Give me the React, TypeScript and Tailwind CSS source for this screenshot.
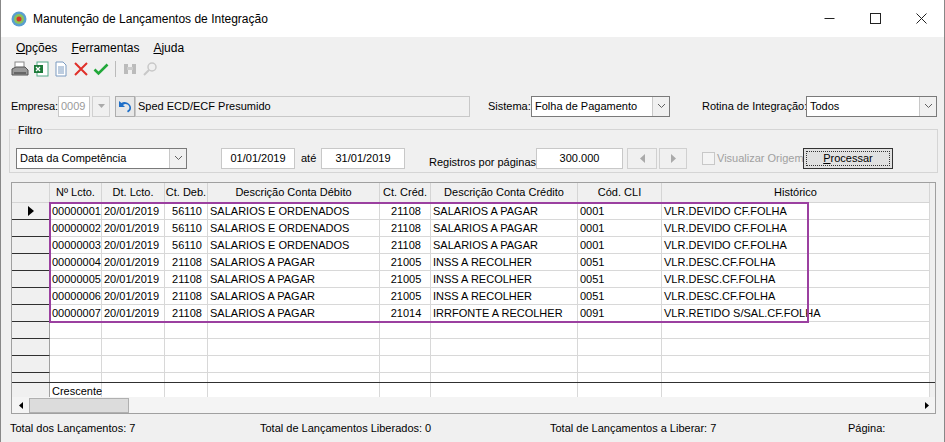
import React from "react";

const cols = [38, 52, 63, 43, 172, 51, 147, 84, 268];
const heads = ["", "Nº Lcto.", "Dt. Lcto.", "Ct. Deb.", "Descrição Conta Débito", "Ct. Créd.", "Descrição Conta Crédito", "Cód. CLI", "Histórico"];
const rows = [
  ["00000001", "20/01/2019", "56110", "SALARIOS E ORDENADOS", "21108", "SALARIOS A PAGAR", "0001", "VLR.DEVIDO CF.FOLHA"],
  ["00000002", "20/01/2019", "56110", "SALARIOS E ORDENADOS", "21108", "SALARIOS A PAGAR", "0001", "VLR.DEVIDO CF.FOLHA"],
  ["00000003", "20/01/2019", "56110", "SALARIOS E ORDENADOS", "21108", "SALARIOS A PAGAR", "0001", "VLR.DEVIDO CF.FOLHA"],
  ["00000004", "20/01/2019", "21108", "SALARIOS A PAGAR", "21005", "INSS A RECOLHER", "0051", "VLR.DESC.CF.FOLHA"],
  ["00000005", "20/01/2019", "21108", "SALARIOS A PAGAR", "21005", "INSS A RECOLHER", "0051", "VLR.DESC.CF.FOLHA"],
  ["00000006", "20/01/2019", "21108", "SALARIOS A PAGAR", "21005", "INSS A RECOLHER", "0051", "VLR.DESC.CF.FOLHA"],
  ["00000007", "20/01/2019", "21108", "SALARIOS A PAGAR", "21014", "IRRFONTE A RECOLHER", "0091", "VLR.RETIDO S/SAL.CF.FOLHA"],
];
const center = [false, false, false, true, false, true, false, false, false];
const rowHeights = [17, 17, 17, 17, 17, 17, 17, 17, 17, 17, 9];

const Chevron = () => (
  <svg width="9" height="6" viewBox="0 0 9 6"><path d="M1 1l3.5 3.5L8 1" fill="none" stroke="#606060" strokeWidth="1" /></svg>
);

function Select({ text, w }: { text: string; w: string }) {
  return (
    <div className={`flex h-[21px] shrink-0 items-center border border-[#7a7a7a] bg-white ${w}`}>
      <span className="flex-1 pl-[3px] truncate">{text}</span>
      <div className="flex h-full w-[17px] items-center justify-center border-l border-[#c8c8c8] bg-[#f0f0f0]"><Chevron /></div>
    </div>
  );
}

export default function App() {
  return (
    <div className="w-[945px] h-[442px] bg-[#f0f0f0] text-[11px] text-black overflow-hidden border-x border-[#888] whitespace-nowrap" style={{ fontFamily: "'Liberation Sans', Arial, sans-serif" }}>
      {/* Title */}
      <div className="flex h-[37px] items-center bg-white pl-[10px]">
        <svg width="16" height="16" viewBox="0 0 16 16"><circle cx="8" cy="8" r="7.5" fill="#5a9fd0" /><circle cx="8" cy="8" r="5" fill="#8cc35a" /><circle cx="8" cy="8" r="2.5" fill="#d8332a" /></svg>
        <span className="ml-[6px] text-[12px]">Manutenção de Lançamentos de Integração</span>
        <div className="ml-auto flex h-full">
          {["min", "max", "close"].map(k => (
            <div key={k} className="flex w-[46px] items-center justify-center">
              <svg width="11" height="11" viewBox="0 0 11 11" fill="none" stroke="#222" strokeWidth="1">
                {k === "min" && <path d="M0.5 5.5h10" />}
                {k === "max" && <rect x="0.5" y="0.5" width="10" height="10" />}
                {k === "close" && <path d="M0.5 0.5l10 10M10.5 0.5l-10 10" />}
              </svg>
            </div>
          ))}
        </div>
      </div>
      {/* Menu */}
      <div className="flex h-[19px] items-center gap-[14px] pl-[15px] pt-[2px] text-[12px]">
        <span><u>O</u>pções</span><span><u>F</u>erramentas</span><span><u>A</u>juda</span>
      </div>
      {/* Toolbar */}
      <div className="flex h-[26px] items-center gap-[4px] pl-[10px]">
        <svg width="18" height="16" viewBox="0 0 18 16"><rect x="4" y="1" width="9" height="6" fill="#fff" stroke="#888" /><path d="M1 8l4-2h9l3 3v5H1z" fill="#9a9a9a" stroke="#555" /><rect x="3" y="11" width="12" height="2" fill="#666" /></svg>
        <svg width="16" height="16" viewBox="0 0 16 16"><rect x="4" y="1" width="11" height="14" fill="#fff" stroke="#5a8" /><rect x="1" y="4" width="9" height="8" fill="#1d7a3a" /><path d="M3 6l4 4M7 6l-4 4" stroke="#fff" strokeWidth="1.3" /></svg>
        <svg width="16" height="16" viewBox="0 0 16 16"><path d="M3 1h7l3 3v11H3z" fill="#fff" stroke="#7a9ac0" /><path d="M5 6h6M5 8h6M5 10h6M5 12h6" stroke="#7a9ac0" /></svg>
        <svg width="16" height="16" viewBox="0 0 16 16"><path d="M2 2l12 12M14 2L2 14" stroke="#e0302a" strokeWidth="2" /></svg>
        <svg width="16" height="16" viewBox="0 0 16 16"><path d="M1.5 8.5l4 4 9-9" fill="none" stroke="#22a83a" strokeWidth="2.6" /></svg>
        <div className="mx-[2px] h-[16px] w-px bg-[#bbb]" />
        <svg width="16" height="16" viewBox="0 0 16 16"><rect x="2" y="3" width="4" height="10" fill="#bbb" /><rect x="10" y="3" width="4" height="10" fill="#bbb" /><rect x="5" y="6" width="6" height="3" fill="#ccc" /></svg>
        <svg width="16" height="16" viewBox="0 0 16 16"><circle cx="10" cy="6" r="4" fill="none" stroke="#c8c8c8" strokeWidth="1.5" /><path d="M7 9l-5 5" stroke="#c8c8c8" strokeWidth="2" /></svg>
      </div>
      {/* Row 1 */}
      <div className="mt-[13px] flex h-[22px] items-center pl-[10px]">
        <span className="w-[47px]">Empresa:</span>
        <div className="flex h-[21px] w-[32px] shrink-0 items-center border border-[#c8c8c8] bg-white pl-[2px] text-[#9a9a9a]">0009</div>
        <div className="ml-[2px] flex h-[21px] w-[18px] shrink-0 items-center justify-center border border-[#d0d0d0] bg-[#f0f0f0]">
          <svg width="7" height="4" viewBox="0 0 7 4"><path d="M0 0h7L3.5 4z" fill="#aaa" /></svg>
        </div>
        <div className="ml-[5px] flex h-[21px] w-[20px] shrink-0 items-center justify-center border border-[#adadad] bg-[#e8e8e8]">
          <svg width="16" height="14" viewBox="0 0 16 14"><path d="M2 2v6h6L6 6c2-2 5-1 6 1 1 2 0 4-2 5l1 1.5c3-1.5 4-5 2-7.5S7 2 4.5 4z" fill="#1f6fc8" /></svg>
        </div>
        <div className="flex h-[21px] w-[335px] shrink-0 items-center border border-[#c8c8c8] bg-[#f0f0f0] pl-[2px]">Sped ECD/ECF Presumido</div>
        <span className="ml-[18px] w-[43px]">Sistema:</span>
        <Select text="Folha de Pagamento" w="w-[139px]" />
        <span className="ml-[32px] w-[104px]">Rotina de Integração:</span>
        <Select text="Todos" w="w-[131px]" />
      </div>
      {/* Filtro */}
      <div className="relative ml-[8px] mt-[12px] h-[44px] w-[929px] border border-[#d5d5d5]">
        <span className="absolute left-[6px] top-[-8px] bg-[#f0f0f0] px-[2px]">Filtro</span>
        <div className="mt-[16px] flex items-center pl-[6px]">
          <Select text="Data da Competência" w="w-[171px]" />
          <div className="ml-[34px] flex h-[21px] w-[74px] shrink-0 items-center justify-center border border-[#c8c8c8] bg-white">01/01/2019</div>
          <span className="ml-[6px] w-[18px]">até</span>
          <div className="ml-[2px] flex h-[21px] w-[84px] shrink-0 items-center justify-center border border-[#c8c8c8] bg-white">31/01/2019</div>
          <span className="ml-[24px] mt-[8px] w-[105px]">Registros por páginas:</span>
          <div className="ml-[2px] flex h-[21px] w-[87px] shrink-0 items-center justify-center border border-[#c8c8c8] bg-white">300.000</div>
          <div className="ml-[4px] flex h-[21px] w-[30px] items-center justify-center border border-[#d0d0d0]"><svg width="5" height="9"><path d="M5 0v9L0 4.5z" fill="#aaa" /></svg></div>
          <div className="ml-[2px] flex h-[21px] w-[28px] items-center justify-center border border-[#d0d0d0]"><svg width="5" height="9"><path d="M0 0v9l5-4.5z" fill="#aaa" /></svg></div>
          <div className="ml-[15px] h-[13px] w-[13px] border border-[#c8c8c8] bg-[#f4f4f4]" />
          <span className="ml-[2px] w-[86px] text-[#a0a0a0]">Visualizar Origem</span>
          <div className="flex h-[21px] w-[90px] items-center justify-center border border-[#333] bg-[#e1e1e1]">
            <div className="flex h-[15px] w-[84px] items-center justify-center border border-dotted border-[#333]"><span><u>P</u>rocessar</span></div>
          </div>
        </div>
      </div>
      {/* Grid */}
      <div className="relative ml-[10px] mt-[9px] h-[232px] w-[925px] border border-[#a0a0a0] bg-[#f0f0f0]">
        <div className="flex h-[20px]">
          {heads.map((h, i) => (
            <div key={i} style={{ width: cols[i] }} className="flex shrink-0 items-center justify-center border-r border-b border-[#d5d5d5] bg-[#f0f0f0]">{h}</div>
          ))}
        </div>
        {rowHeights.map((hgt, r) => (
          <div key={r} className="flex" style={{ height: hgt }}>
            {cols.map((w, i) => (
              <div key={i} style={{ width: w }} className={`flex shrink-0 items-center overflow-hidden ${i === 0 ? "justify-center border-r border-r-[#a0a0a0] bg-[#f0f0f0] " + (r < 10 ? "border-b border-b-[#303030]" : "") : "border-r border-[#d8d8d8] bg-white pl-[2px] " + (r < 10 ? "border-b " : "") + (center[i] ? "justify-center" : "")}`}>
                {i === 0 && r === 0 && <svg width="6" height="10"><path d="M0 0v10l6-5z" fill="#000" /></svg>}
                {i > 0 && rows[r] ? rows[r][i - 1] : null}
              </div>
            ))}
          </div>
        ))}
        <div className="flex h-[15px] border-t border-[#303030]">
          {cols.map((w, i) => (
            <div key={i} style={{ width: w }} className={`shrink-0 border-r border-[#d8d8d8] pl-[2px] ${i === 0 ? "bg-[#f0f0f0] border-r-[#a0a0a0]" : "bg-white"}`}>{i === 1 ? "Crescente" : ""}</div>
          ))}
        </div>
        <div className="flex h-[16px] items-center bg-[#f4f4f4]">
          <div className="flex h-[16px] w-[17px] items-center justify-center"><svg width="4" height="7"><path d="M4 0v7L0 3.5z" fill="#000" /></svg></div>
          <div className="h-[15px] w-[100px] border border-[#b0b0b0] bg-[#dcdcdc]" />
          <div className="flex-1" />
          <div className="flex h-[16px] w-[17px] items-center justify-center"><svg width="4" height="7"><path d="M0 0v7l4-3.5z" fill="#000" /></svg></div>
        </div>
        <div className="pointer-events-none absolute left-[37px] top-[19px] h-[121px] w-[760px] border-2 border-[#9b40a0]" />
      </div>
      {/* Status */}
      <div className="mt-[6px] flex pl-[9px]">
        <span className="w-[250px]">Total dos Lançamentos: 7</span>
        <span className="w-[290px]">Total de Lançamentos Liberados: 0</span>
        <span className="w-[298px]">Total de Lançamentos a Liberar: 7</span>
        <span>Página:</span>
      </div>
    </div>
  );
}
